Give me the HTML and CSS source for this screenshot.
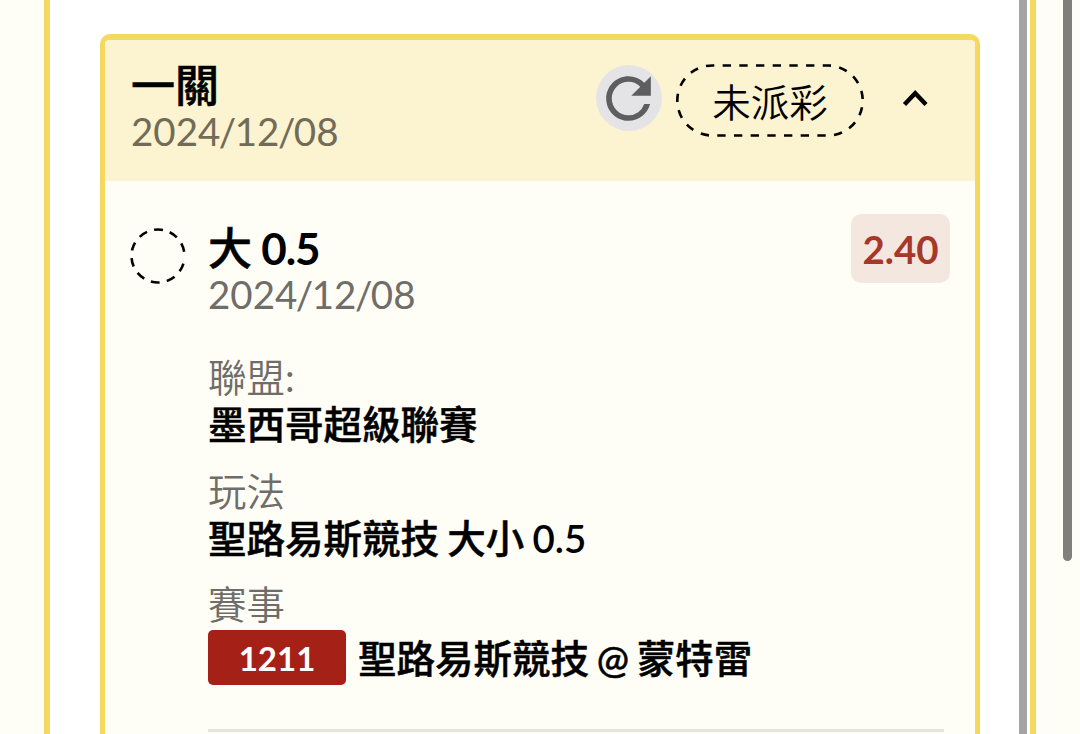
FILE: index.html
```
<!DOCTYPE html>
<html lang="zh-Hant">
<head>
  <meta charset="UTF-8">
  <meta name="viewport" content="width=device-width, initial-scale=1.0">
  <title>注單</title>
  <link rel="stylesheet" href="styles.css">
</head>
<body>
  <div class="panel">
    <div class="card">
      <div class="card-header">
        <div class="heading">
          <div class="title">一關</div>
          <div class="date">2024<i>/</i>12<i>/</i>08</div>
        </div>
        <div class="actions">
          <button class="refresh">
            <svg viewBox="0 0 24 24"><path d="M17.65 6.35A7.958 7.958 0 0 0 12 4c-4.42 0-7.99 3.58-7.99 8s3.57 8 7.99 8c3.73 0 6.84-2.55 7.73-6h-2.08A5.99 5.99 0 0 1 12 18c-3.31 0-6-2.69-6-6s2.69-6 6-6c1.66 0 3.14.69 4.22 1.78L13 11h7V4l-2.35 2.35z"/></svg>
          </button>
          <div class="status">
            <svg viewBox="0 0 188 73"><rect x="1.3" y="1.5" width="185.4" height="70" rx="35" pathLength="27"/></svg>
            <span>未派彩</span>
          </div>
          <svg class="chevron" viewBox="0 0 28 20"><path d="M3.5 16.5L14.2 5.2L25 16.5"/></svg>
        </div>
      </div>
      <div class="bet">
        <svg class="pending" viewBox="0 0 56 56"><circle cx="28" cy="28" r="26.5" pathLength="360" transform="rotate(16.5 28 28)"/></svg>
        <div class="bet-info">
          <div class="bet-top">
            <div class="heading">
              <div class="title">大 <b>0.5</b></div>
              <div class="date">2024<i>/</i>12<i>/</i>08</div>
            </div>
            <div class="odds">2.40</div>
          </div>
          <dl>
            <dt>聯盟<b>:</b></dt>
            <dd>墨西哥超級聯賽</dd>
            <dt>玩法</dt>
            <dd>聖路易斯競技 大小 <b>0.5</b></dd>
            <dt>賽事</dt>
            <dd class="match"><span class="code">1211</span>聖路易斯競技 @ 蒙特雷</dd>
          </dl>
          <hr>
        </div>
      </div>
    </div>
    <div class="panel-scroll"></div>
  </div>
  <div class="page-scroll"></div>
</body>
</html>
```
FILE: styles.css
```
* {
  box-sizing: border-box;
}
body {
  margin: 0;
  height: 734px;
  overflow: hidden;
  position: relative;
  display: flex;
  background: #fffef6;
  font-family: Lato, "Noto Sans CJK TC", sans-serif;
  font-size: 38.5px;
  color: #000;
}
.panel {
  display: flex;
  justify-content: space-between;
  width: 992px;
  height: 734px;
  margin-left: 44px;
  padding: 34px 3px 0 50px;
  background: #fff;
  border: solid #f5d860;
  border-width: 0 6px;
}
.panel-scroll {
  width: 8px;
  height: 734px;
  margin-top: -34px;
  background: #a5a3a3;
}
.page-scroll {
  position: absolute;
  top: 0;
  right: 8px;
  width: 9px;
  height: 561px;
  border-radius: 0 0 5px 5px;
  background: #807f7b;
}
.card {
  width: 880px;
  height: 700px;
  border: 5px solid #f5d860;
  border-top-width: 6px;
  border-bottom: none;
  border-radius: 10px 10px 0 0;
  background: #fffef6;
}
.card-header {
  display: flex;
  justify-content: space-between;
  height: 141px;
  padding: 22px 46px 0 26px;
  border-radius: 4px 4px 0 0;
  background: #fcf3d0;
}
.title {
  height: 46px;
  line-height: 46px;
  font-size: 44px;
  font-weight: 500;
  word-spacing: -2px;
  white-space: nowrap;
  -webkit-text-stroke: .6px #000;
}
.title b {
  font-weight: 700;
  letter-spacing: -1px;
  -webkit-text-stroke: 0;
}
.date {
  height: 46px;
  line-height: 46px;
  color: #6f6d69;
}
.date i {
  margin: 0 -1.5px;
  font-style: normal;
}
.card-header .date {
  color: #716b58;
}
.actions {
  display: flex;
  align-items: flex-start;
}
.refresh {
  display: flex;
  align-items: center;
  justify-content: center;
  width: 66px;
  height: 66px;
  margin: 3px 14px 0 0;
  padding: 0 1px 0 0;
  border: none;
  border-radius: 50%;
  background: #e4e4e7;
}
.refresh svg {
  flex: none;
  width: 67px;
  height: 67px;
  fill: #5e5e60;
}
.status {
  position: relative;
  width: 188px;
  height: 73px;
  margin-top: 2px;
  line-height: 77px;
  font-weight: 350;
  text-align: center;
}
.status svg {
  position: absolute;
  top: 0;
  left: 0;
  width: 188px;
  height: 73px;
  fill: none;
  stroke: #000;
  stroke-width: 2.6;
  stroke-dasharray: .5 .5;
  stroke-dashoffset: .38;
}
.chevron {
  width: 28px;
  height: 20px;
  margin: 26px 0 0 37px;
  fill: none;
  stroke: #000;
  stroke-width: 4.4;
}
.bet {
  display: flex;
  align-items: flex-start;
  padding: 33px 25px 0 25px;
}
.pending {
  flex: none;
  width: 56px;
  height: 56px;
  margin: 13.5px 22px 0 0;
  fill: none;
  stroke: #000;
  stroke-width: 2.6;
  stroke-dasharray: 19 16 19 16 19 16 19 16 19 16 19 16 19 16 19 16 19 16 19 26;
}
.bet-info {
  flex: 1;
}
.bet-top {
  display: flex;
  justify-content: space-between;
}
.bet-top .heading {
  padding-top: 11px;
}
.odds {
  width: 99px;
  height: 69px;
  line-height: 71px;
  border-radius: 10px;
  background: #f4e7e0;
  color: #a5382a;
  font-weight: 700;
  text-align: center;
}
dl {
  margin: 37px 0 0;
}
dt {
  height: 47px;
  line-height: 47px;
  font-weight: 350;
  color: #6f6d69;
}
dt b {
  font-weight: 400;
}
dd {
  height: 47px;
  margin: 0 0 19.5px;
  line-height: 46px;
  font-weight: 500;
  word-spacing: -1.5px;
  white-space: nowrap;
  -webkit-text-stroke: .5px #000;
}
dd b {
  font-weight: 600;
  -webkit-text-stroke: 0;
}
.match {
  display: flex;
  align-items: center;
  height: 55px;
  margin: 2px 0 0;
  line-height: 62px;
  word-spacing: -2px;
}
.code {
  width: 138px;
  height: 55px;
  margin-right: 12px;
  line-height: 57px;
  border-radius: 5px;
  background: #a52117;
  color: #fff;
  font-size: 33px;
  font-weight: 700;
  text-align: center;
  -webkit-text-stroke: 0;
}
hr {
  height: 3px;
  margin: 44px 6px 0 0;
  border: none;
  background: #e4e3dc;
}
```
